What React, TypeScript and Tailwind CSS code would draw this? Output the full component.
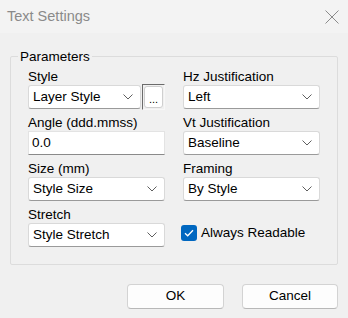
import React from 'react';

const Chevron: React.FC = () => (
  <svg width="10" height="6" viewBox="0 0 10 6" className="shrink-0">
    <path d="M0.5 0.5 L5 5 L9.5 0.5" fill="none" stroke="#5f5f5f" strokeWidth="1" />
  </svg>
);

const Select: React.FC<{ value: string; className?: string }> = ({ value, className = '' }) => (
  <div
    className={`h-[24px] flex items-center justify-between pl-[4px] pr-[7px] bg-white border border-[#d9d9d9] border-b-[#9a9a9a] rounded-[3px] text-black ${className}`}
  >
    <span>{value}</span>
    <Chevron />
  </div>
);

const Field: React.FC<{ label: string; children: React.ReactNode }> = ({ label, children }) => (
  <div className="flex flex-col">
    <div className="h-[16px] leading-[16px]">{label}</div>
    {children}
  </div>
);

export default function App() {
  return (
    <div
      className="w-[348px] h-[318px] bg-[#f0f0f0] text-[13.5px] text-[#1a1a1a] flex flex-col overflow-hidden"
      style={{ fontFamily: '"Liberation Sans", Arial, sans-serif' }}
    >
      {/* title bar */}
      <div className="h-[33px] bg-[#f3f3f3] flex items-center justify-between pl-[7px] pr-[8px] shrink-0">
        <span className="text-[14.5px] text-[#8a8a8a]">Text Settings</span>
        <svg width="14" height="14" viewBox="0 0 14 14" className="mr-[1px]">
          <path d="M0.5 0.5 L13.5 13.5 M13.5 0.5 L0.5 13.5" stroke="#8a8a8a" strokeWidth="1" />
        </svg>
      </div>

      {/* group box */}
      <fieldset className="mx-[10px] mt-[16px] h-[216px] border border-[#dcdcdc] rounded-[2px] px-[17px] pb-[15px] pt-[5px]">
        <legend className="-ml-[10px] px-[2px] leading-[15px] text-black">Parameters</legend>
        <div className="grid grid-cols-2 gap-x-[18px] gap-y-[6px] text-black">
          <Field label="Style">
            <div className="flex items-center gap-[1px]">
              <Select value="Layer Style" className="flex-1" />
              <div className="w-[23px] h-[26px] -my-[1px] border-t border-l border-[#6b6b6b] border-r border-b border-r-[#f7f7f7] border-b-[#f7f7f7] flex">
                <div className="flex-1 m-[1px] bg-white border border-[#cfcfcf] rounded-[3px] flex items-end justify-center pb-[2px] text-[11px] leading-[11px]">
                  ...
                </div>
              </div>
            </div>
          </Field>
          <Field label="Hz Justification">
            <Select value="Left" />
          </Field>
          <Field label="Angle (ddd.mmss)">
            <div className="h-[24px] flex items-center pl-[3px] bg-white border border-[#e3e3e3] border-b-[#8a8a8a]">
              0.0
            </div>
          </Field>
          <Field label="Vt Justification">
            <Select value="Baseline" />
          </Field>
          <Field label="Size (mm)">
            <Select value="Style Size" />
          </Field>
          <Field label="Framing">
            <Select value="By Style" />
          </Field>
          <Field label="Stretch">
            <Select value="Style Stretch" />
          </Field>
          <div className="flex items-end pb-[4px] -ml-[2px]">
            <div className="flex items-center gap-[4px]">
              <div className="w-[16px] h-[16px] rounded-[3px] bg-[#0067c0] flex items-center justify-center">
                <svg width="10" height="8" viewBox="0 0 10 8">
                  <path d="M1 4.2 L3.7 6.8 L9 1.2" fill="none" stroke="white" strokeWidth="1.3" />
                </svg>
              </div>
              <span>Always Readable</span>
            </div>
          </div>
        </div>
      </fieldset>

      {/* buttons */}
      <div className="flex justify-end gap-[18px] pr-[10px] mt-[19px]">
        <div className="w-[97px] h-[25px] flex items-center justify-center bg-[#fdfdfd] border border-[#d3d3d3] border-b-[#b8b8b8] rounded-[4px] text-black">
          OK
        </div>
        <div className="w-[96px] h-[25px] flex items-center justify-center bg-[#fdfdfd] border border-[#d3d3d3] border-b-[#b8b8b8] rounded-[4px] text-black">
          Cancel
        </div>
      </div>
    </div>
  );
}
